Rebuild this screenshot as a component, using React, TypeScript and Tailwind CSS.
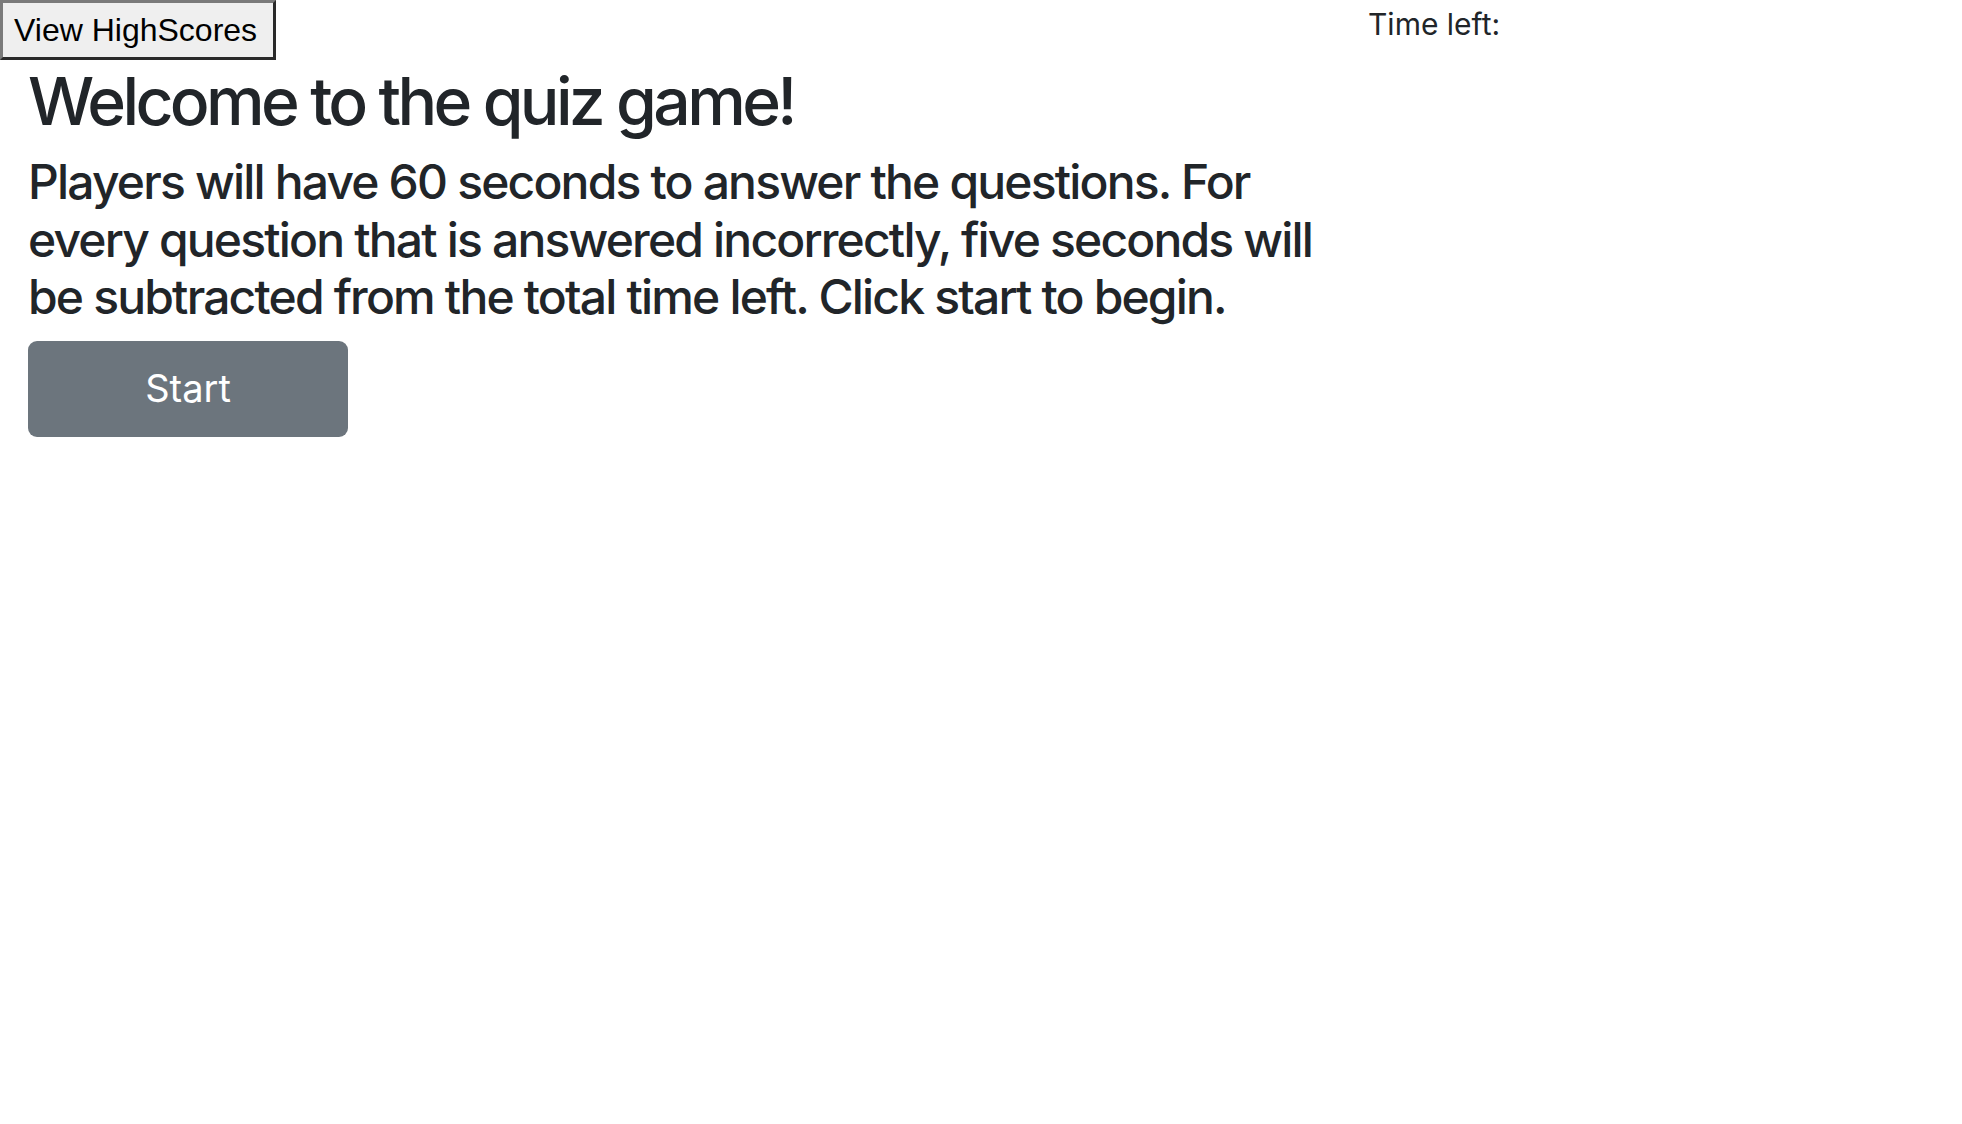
export default function App() {
  return (
    <div className="min-h-[1124px] w-[1962px] bg-white text-[#212529]" style={{ fontFamily: "Inter, 'Noto Sans', sans-serif" }}>
      <div className="grid grid-cols-[1368px_1fr] items-start">
        <div>
          <button className="h-[60px] w-[276px] border-[3px] border-t-[#7a7a7a] border-l-[#7a7a7a] border-r-[#2a2a2a] border-b-[#2a2a2a] bg-[#efefef] text-left pl-[11px] text-[32px] leading-none text-black [font-family:'Liberation_Sans',Arial,sans-serif]">
            View HighScores
          </button>
        </div>
        <div className="pt-[6px] text-[30px] leading-[36px] font-normal">Time left:</div>
      </div>
      <div className="pl-[28px]">
        <h1 className="mb-[11px] text-[66px] font-medium leading-[82px] tracking-[-0.055em]">Welcome to the quiz game!</h1>
        <p className="mb-[15px] w-[1300px] text-[48px] font-medium leading-[57.5px] tracking-[-0.038em]">
          Players will have 60 seconds to answer the questions. For every question that is answered incorrectly, five seconds will be subtracted from the total time left. Click start to begin.
        </p>
        <button className="h-[96px] w-[320px] rounded-[9px] bg-[#6c757d] text-[38px] font-normal text-white">Start</button>
      </div>
    </div>
  );
}
